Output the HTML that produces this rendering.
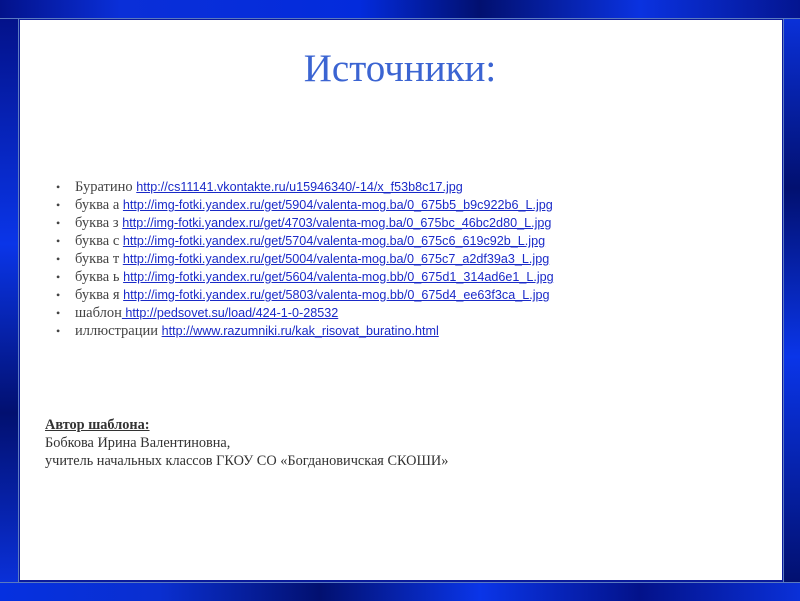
<!DOCTYPE html>
<html><head><meta charset="utf-8"><style>
html,body{margin:0;padding:0;}
body{width:800px;height:600px;position:relative;overflow:hidden;background:#0a1a9a;}
.bar{position:absolute;}
.top{left:0;top:0;width:800px;height:18px;background:linear-gradient(90deg,#03128a 0%,#0a2fd8 15%,#032bdc 45%,#021070 60%,#0a32e0 80%,#041590 100%);border-bottom:1px solid #5a7ac0;}
.bot{left:0;top:582px;width:800px;height:18px;background:linear-gradient(90deg,#0530e0 0%,#0a2fd0 20%,#021070 40%,#0a35e8 60%,#03128a 80%,#0a30d8 100%);border-top:1px solid #5a7ac0;}
.lft{left:0;top:19px;width:18px;height:563px;background:linear-gradient(180deg,#03128a 0%,#0a35e8 40%,#021070 70%,#0a30d8 100%);border-right:1px solid #5a7ac0;}
.rgt{left:783px;top:19px;width:17px;height:563px;background:linear-gradient(180deg,#0a30d8 0%,#021070 30%,#0a35e8 60%,#021070 100%);border-left:1px solid #5a7ac0;}
.page{position:absolute;left:20px;top:20px;width:762px;height:560px;background:#fff;}
h1{position:absolute;left:0;width:800px;top:46px;margin:0;text-align:center;font:39px "Liberation Serif",serif;color:#3b64d2;}
.ls{position:absolute;left:0;top:178px;font:14.5px "Liberation Serif",serif;color:#444;}
.ls div{position:absolute;left:75px;white-space:nowrap;height:18px;line-height:18px;}
.ls span.b{position:absolute;left:-19px;font-size:12px;}
a{color:#1a2ac8;text-decoration:underline;font:12.6px "Liberation Sans",sans-serif;}
.au{position:absolute;left:45px;top:416px;font:14.3px "Liberation Serif",serif;color:#333;line-height:18px;}
</style></head><body>
<div class="bar top"></div><div class="bar bot"></div><div class="bar lft"></div><div class="bar rgt"></div>
<div class="page"></div>
<h1>Источники:</h1>
<div class="ls">
<div style="top:0"><span class="b">•</span>Буратино <a>http://cs11141.vkontakte.ru/u15946340/-14/x_f53b8c17.jpg</a></div>
<div style="top:18px"><span class="b">•</span>буква а <a>http://img-fotki.yandex.ru/get/5904/valenta-mog.ba/0_675b5_b9c922b6_L.jpg</a></div>
<div style="top:36px"><span class="b">•</span>буква з <a>http://img-fotki.yandex.ru/get/4703/valenta-mog.ba/0_675bc_46bc2d80_L.jpg</a></div>
<div style="top:54px"><span class="b">•</span>буква с <a>http://img-fotki.yandex.ru/get/5704/valenta-mog.ba/0_675c6_619c92b_L.jpg</a></div>
<div style="top:72px"><span class="b">•</span>буква т <a>http://img-fotki.yandex.ru/get/5004/valenta-mog.ba/0_675c7_a2df39a3_L.jpg</a></div>
<div style="top:90px"><span class="b">•</span>буква ь <a>http://img-fotki.yandex.ru/get/5604/valenta-mog.bb/0_675d1_314ad6e1_L.jpg</a></div>
<div style="top:108px"><span class="b">•</span>буква я <a>http://img-fotki.yandex.ru/get/5803/valenta-mog.bb/0_675d4_ee63f3ca_L.jpg</a></div>
<div style="top:126px"><span class="b">•</span>шаблон<a> http://pedsovet.su/load/424-1-0-28532</a></div>
<div style="top:144px"><span class="b">•</span>иллюстрации <a>http://www.razumniki.ru/kak_risovat_buratino.html</a></div>
</div>
<div class="au"><b><u>Автор шаблона:</u></b><br>Бобкова Ирина Валентиновна,<br>учитель начальных классов ГКОУ СО «Богдановичская СКОШИ»</div>
</body></html>
